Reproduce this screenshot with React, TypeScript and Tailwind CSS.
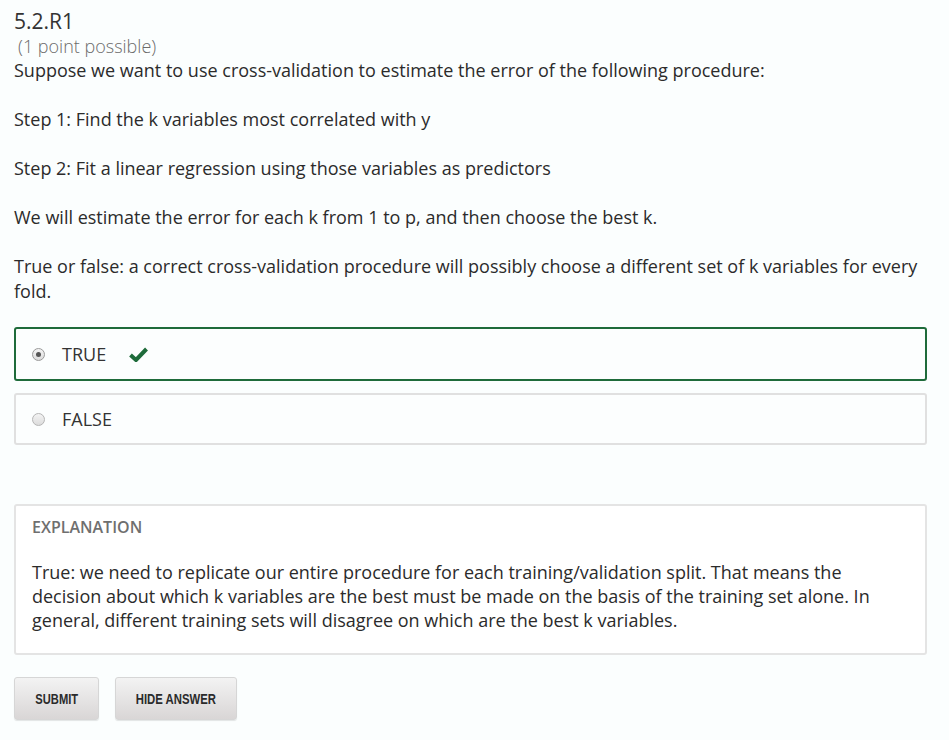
export default function App() {
  return (
    <main className="min-h-[740px] bg-[#fbfefe] px-[14px] pt-[8px] font-['Open_Sans',sans-serif] text-[#2b2b2b]">
      <h2 className="text-[21px] leading-[26px] text-[#333]">5.2.R1</h2>
      <div className="pl-[4px] text-[18px] font-light leading-[24px] text-[#6b6b6b]">(1 point possible)</div>

      <div className="text-[18px] leading-[24.5px]">
        <p className="mb-[24.5px]">Suppose we want to use cross-validation to estimate the error of the following procedure:</p>
        <p className="mb-[24.5px]">Step 1: Find the k variables most correlated with y</p>
        <p className="mb-[24.5px]">Step 2: Fit a linear regression using those variables as predictors</p>
        <p className="mb-[24.5px]">We will estimate the error for each k from 1 to p, and then choose the best k.</p>
        <p>
          True or false: a correct cross-validation procedure will possibly choose a different set of k variables for every fold.
        </p>
      </div>

      <div className="mt-[24px] flex flex-col gap-[12px] pr-[8px]">
        <label className="flex h-[54px] items-center rounded-[3px] border-2 border-[#1e6b3a] bg-[#fcfefe] pl-[16px]">
          <span className="flex h-[13px] w-[13px] items-center justify-center rounded-full border border-[#9a9a9a] bg-gradient-to-b from-[#f4f4f4] to-[#dcdcdc]">
            <span className="h-[5px] w-[5px] rounded-full bg-[#555]" />
          </span>
          <span className="ml-[17px] text-[18px] text-[#333]">TRUE</span>
          <svg className="ml-[23px]" width="19" height="15" viewBox="0 0 19 15">
            <path d="M1.5 8 L7 13 L17.5 2" fill="none" stroke="#1e6b3a" strokeWidth="4" strokeLinejoin="miter" />
          </svg>
        </label>
        <label className="flex h-[52px] items-center rounded-[3px] border-2 border-[#e0e0e0] bg-[#fcfefe] pl-[16px]">
          <span className="h-[13px] w-[13px] rounded-full border border-[#b5b5b5] bg-gradient-to-b from-[#f4f4f4] to-[#dcdcdc]" />
          <span className="ml-[17px] text-[18px] text-[#333]">FALSE</span>
        </label>
      </div>

      <section className="mt-[59px] mr-[8px] rounded-[3px] border-2 border-[#e4e4e4] bg-white px-[16px] pb-[21px] pt-[10px]">
        <h3 className="text-[16px] font-semibold leading-[22px] text-[#6f6f6f]">EXPLANATION</h3>
        <p className="mt-[22px] text-[18px] leading-[24px] text-[#2b2b2b]">
          True: we need to replicate our entire procedure for each training/validation split. That means the decision about which k variables are the best must be made on the basis of the training set alone. In general, different training sets will disagree on which are the best k variables.
        </p>
      </section>

      <div className="mt-[22px] flex gap-[16px]">
        <button className="h-[43px] w-[85px] rounded-[3px] border border-[#d6d6d6] bg-gradient-to-b from-[#f3f3f3] to-[#d9d6d6] text-[#2b2b2b] shadow-[0_1px_1px_rgba(0,0,0,0.1)]">
          <span className="inline-block scale-x-[0.72] font-['Liberation_Sans',sans-serif] text-[15.5px] font-bold">SUBMIT</span>
        </button>
        <button className="h-[43px] w-[122px] rounded-[3px] border border-[#d6d6d6] bg-gradient-to-b from-[#f3f3f3] to-[#d9d6d6] text-[#2b2b2b] shadow-[0_1px_1px_rgba(0,0,0,0.1)]">
          <span className="inline-block scale-x-[0.73] whitespace-nowrap font-['Liberation_Sans',sans-serif] text-[15.5px] font-bold">HIDE ANSWER</span>
        </button>
      </div>
    </main>
  );
}
